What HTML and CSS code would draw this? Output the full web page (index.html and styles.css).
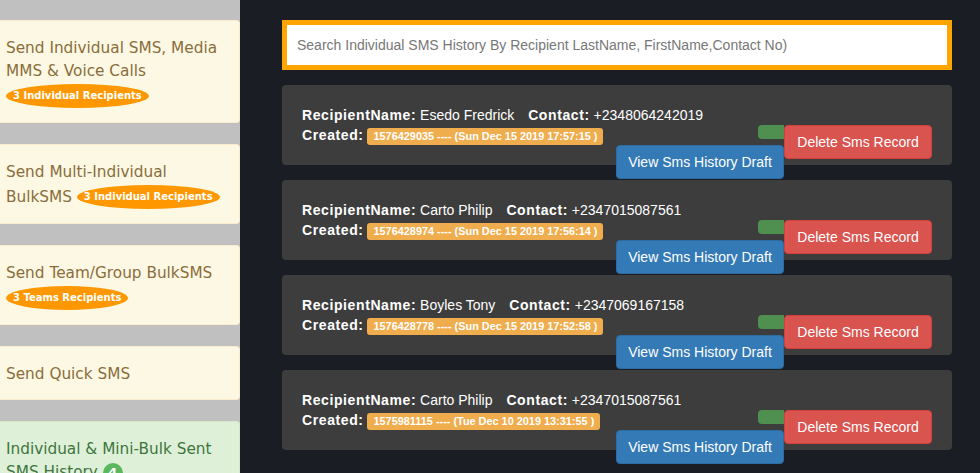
FILE: index.html
```html
<!DOCTYPE html>
<html>
<head>
<meta charset="utf-8">
<link rel="stylesheet" href="styles.css">
</head>
<body>
<div class="page">
  <aside class="sidebar">
    <div class="menu-card">Send Individual SMS, Media MMS &amp; Voice Calls <span class="pill">3 Individual Recipients</span></div>
    <div class="menu-card">Send Multi-Individual BulkSMS <span class="pill">3 Individual Recipients</span></div>
    <div class="menu-card">Send Team/Group BulkSMS <span class="pill">3 Teams Recipients</span></div>
    <div class="menu-card">Send Quick SMS</div>
    <div class="menu-card active">Individual &amp; Mini-Bulk Sent SMS History <span class="count">4</span></div>
  </aside>
  <main class="main">
    <div class="search-wrap">
      <input class="search" type="text" placeholder="Search Individual SMS History By Recipient LastName, FirstName,Contact No)">
    </div>
    <div class="records">
      <div class="record">
        <div class="info">
          <div class="line"><b>RecipientName:</b> Esedo Fredrick <span class="contact"><b>Contact:</b> +2348064242019</span></div>
          <div class="line"><b>Created:</b> <span class="stamp">1576429035 ---- (Sun Dec 15 2019 17:57:15 )</span></div>
        </div>
        <div class="actions">
          <span class="btn-green"></span>
          <button class="btn btn-del">Delete Sms Record</button>
          <button class="btn btn-view">View Sms History Draft</button>
        </div>
      </div>
      <div class="record">
        <div class="info">
          <div class="line"><b>RecipientName:</b> Carto Philip <span class="contact"><b>Contact:</b> +2347015087561</span></div>
          <div class="line"><b>Created:</b> <span class="stamp">1576428974 ---- (Sun Dec 15 2019 17:56:14 )</span></div>
        </div>
        <div class="actions">
          <span class="btn-green"></span>
          <button class="btn btn-del">Delete Sms Record</button>
          <button class="btn btn-view">View Sms History Draft</button>
        </div>
      </div>
      <div class="record">
        <div class="info">
          <div class="line"><b>RecipientName:</b> Boyles Tony <span class="contact"><b>Contact:</b> +2347069167158</span></div>
          <div class="line"><b>Created:</b> <span class="stamp">1576428778 ---- (Sun Dec 15 2019 17:52:58 )</span></div>
        </div>
        <div class="actions">
          <span class="btn-green"></span>
          <button class="btn btn-del">Delete Sms Record</button>
          <button class="btn btn-view">View Sms History Draft</button>
        </div>
      </div>
      <div class="record">
        <div class="info">
          <div class="line"><b>RecipientName:</b> Carto Philip <span class="contact"><b>Contact:</b> +2347015087561</span></div>
          <div class="line"><b>Created:</b> <span class="stamp">1575981115 ---- (Tue Dec 10 2019 13:31:55 )</span></div>
        </div>
        <div class="actions">
          <span class="btn-green"></span>
          <button class="btn btn-del">Delete Sms Record</button>
          <button class="btn btn-view">View Sms History Draft</button>
        </div>
      </div>
    </div>
  </main>
</div>
</body>
</html>
```
FILE: styles.css
```css
html, body {
  margin: 0;
  padding: 0;
  height: 100%;
  overflow: hidden;
}
body {
  background: #1b1d24;
  font-family: "Liberation Sans", Arial, sans-serif;
  font-size: 14px;
}
.page {
  display: flex;
  height: 473px;
}
.sidebar {
  width: 240px;
  flex: none;
  background: #c0c0c0;
  padding-top: 20px;
  box-sizing: border-box;
  display: flex;
  flex-direction: column;
  gap: 21px;
}
.menu-card {
  background: #fcf8e3;
  border: 1px solid #faebcc;
  border-left: none;
  border-radius: 0 4px 4px 0;
  color: #8a6d3b;
  font-family: "Comic Sans MS", "DejaVu Sans", sans-serif;
  font-size: 15.3px;
  line-height: 23px;
  padding: 16px 8px 13px 6px;
}
.menu-card.active {
  background: #dff0d8;
  border-color: #d6e9c6;
  color: #3c763d;
}
.pill {
  display: inline-block;
  background: #ff9800;
  color: #fff;
  font-weight: bold;
  font-size: 10px;
  line-height: 24px;
  height: 24px;
  margin: 1px 0;
  padding: 0 7px;
  border-radius: 50%;
  vertical-align: middle;
}
.count {
  display: inline-block;
  background: #5cb85c;
  color: #fff;
  font-weight: bold;
  font-size: 13px;
  width: 20px;
  height: 20px;
  line-height: 20px;
  text-align: center;
  border-radius: 50%;
  vertical-align: middle;
}
.main {
  flex: 1;
  padding: 20px 28px 0 42px;
  min-width: 0;
}
.search-wrap {
  border: 5px solid #ffa500;
  background: #fff;
}
.search {
  display: block;
  width: 100%;
  box-sizing: border-box;
  height: 40px;
  border: none;
  outline: none;
  padding: 0 10px;
  font-family: "Liberation Sans", Arial, sans-serif;
  font-size: 14px;
  color: #555;
  background: #fff;
}
.search::placeholder {
  color: #777;
}
.records {
  margin-top: 15px;
  display: flex;
  flex-direction: column;
  gap: 15px;
}
.record {
  background: #3d3d3d;
  border-radius: 4px;
  height: 80px;
  box-sizing: border-box;
  padding: 20px 20px 0 20px;
  display: flex;
  color: #fff;
}
.info {
  flex: 1;
  min-width: 0;
}
.line {
  line-height: 20px;
  height: 20px;
  white-space: nowrap;
}
.line b {
  letter-spacing: 0.6px;
}
.contact {
  margin-left: 10px;
}
.stamp {
  display: inline-block;
  background: #f0ad4e;
  color: #fff;
  font-weight: bold;
  font-size: 10.9px;
  line-height: 13px;
  padding: 2px 6px 2px;
  border-radius: 3px;
  vertical-align: 0;
}
.actions {
  flex: none;
  margin-top: 20px;
  display: grid;
  grid-template-columns: 168px 148px;
  grid-template-rows: 20px 14px 20px;
  align-self: flex-start;
}
.btn-green {
  grid-column: 1;
  grid-row: 1;
  justify-self: end;
  width: 26px;
  height: 14px;
  background: #4f8f4f;
  border-radius: 4px 0 0 4px;
}
.btn {
  font-family: "Liberation Sans", Arial, sans-serif;
  font-size: 14px;
  color: #fff;
  border-radius: 4px;
  border: 1px solid transparent;
  padding: 0;
  margin: 0;
  height: 34px;
}
.btn-del {
  grid-column: 2;
  grid-row: 1 / 3;
  background: #d9534f;
  border-color: #d43f3a;
}
.btn-view {
  grid-column: 1;
  grid-row: 2 / 4;
  background: #337ab7;
  border-color: #2e6da4;
}
```
